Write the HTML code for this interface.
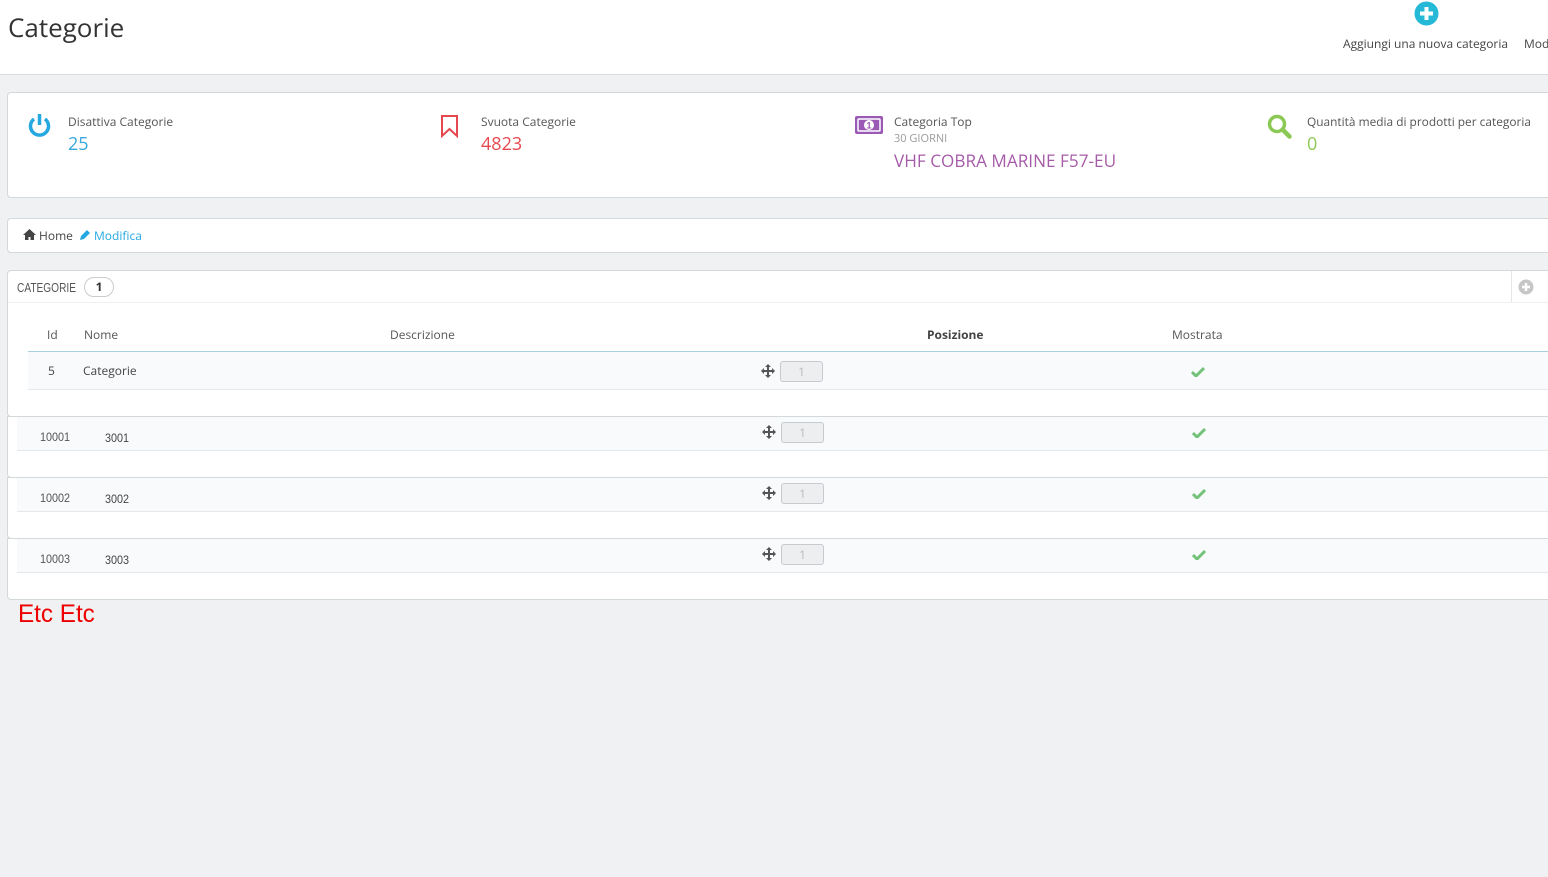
<!DOCTYPE html>
<html><head><meta charset="utf-8"><style>
*{box-sizing:border-box;margin:0;padding:0}
body{width:1548px;height:877px;background:#eff1f2;font-family:"Open Sans","DejaVu Sans",sans-serif;color:#555;position:relative;overflow:hidden;font-size:12px}
.a{position:absolute;white-space:nowrap}
.top{position:absolute;left:0;top:0;width:1548px;height:75px;background:#fff;border-bottom:1px solid #d8dbde}
.panel{position:absolute;left:7px;width:1560px;background:#fff;border:1px solid #d3d8db;border-radius:4px}
.row{position:absolute;left:20px;width:1540px;background:#f8fafc;border-bottom:1px solid #e4e8eb}
.inp{position:absolute;width:43px;height:21px;background:#eceeef;border:1px solid #c7cbcf;border-radius:3px;color:#bbb;text-align:center;font-size:12px;line-height:19px}
.chk{position:absolute}
.mv{position:absolute}
.n{font-family:'Liberation Sans',sans-serif;font-size:12px;transform:scaleX(.9);transform-origin:left}
</style></head><body>
<div class="top"></div>
<div class="a" style="left:8px;top:9px;font-size:26px;color:#333">Categorie</div>
<svg class="a" style="left:1414px;top:1px" width="25" height="25"><circle cx="12.5" cy="12.5" r="12" fill="#25b9d7"/><path d="M12.5 6v13M6 12.5h13" stroke="#fff" stroke-width="4"/></svg>
<div class="a" style="left:1343px;top:35px;font-size:12px;color:#444">Aggiungi una nuova categoria</div>
<div class="a" style="left:1524px;top:35px;font-size:12px;color:#444">Mod</div>

<div class="panel" style="top:92px;height:106px"></div>
<svg class="a" style="left:27px;top:112px" width="25" height="26"><path d="M7 7a9 9 0 1 0 11 0" fill="none" stroke="#25a8e0" stroke-width="3.5"/><path d="M12.5 2v11" stroke="#25a8e0" stroke-width="3.5"/></svg>
<div class="a" style="left:68px;top:113px;font-size:12px;color:#555">Disattiva Categorie</div>
<div class="a" style="left:68px;top:132px;font-size:18px;color:#3aa7dd">25</div>
<svg class="a" style="left:440px;top:114px" width="20" height="24"><path d="M2 2h15v20l-7.5-7-7.5 7z" fill="none" stroke="#e5494f" stroke-width="2"/></svg>
<div class="a" style="left:481px;top:113px;font-size:12px;color:#555">Svuota Categorie</div>
<div class="a" style="left:481px;top:132px;font-size:18px;color:#e5494f">4823</div>
<svg class="a" style="left:854px;top:115px" width="30" height="20"><rect x="1" y="1" width="28" height="18" rx="2" fill="#9b59b6"/><rect x="4" y="4" width="22" height="12" rx="1" fill="none" stroke="#fff" stroke-width="1.5"/><circle cx="15" cy="10" r="5" fill="#fff"/><text x="15" y="13.5" font-size="9" text-anchor="middle" fill="#9b59b6" font-family="Liberation Sans" font-weight="bold">1</text></svg>
<div class="a" style="left:894px;top:113px;font-size:12px;color:#555">Categoria Top</div>
<div class="a" style="left:894px;top:131px;font-size:11px;color:#999">30 GIORNI</div>
<div class="a" style="left:894px;top:149px;font-size:17px;color:#a55ba8;transform:scaleX(1.01);transform-origin:left">VHF COBRA MARINE F57-EU</div>
<svg class="a" style="left:1266px;top:113px" width="28" height="28"><circle cx="11" cy="11" r="7.5" fill="none" stroke="#8bc954" stroke-width="3.5"/><path d="M16.5 16.5l7 7" stroke="#8bc954" stroke-width="4.5" stroke-linecap="round"/></svg>
<div class="a" style="left:1307px;top:113px;font-size:12px;color:#555;transform:scaleX(.99);transform-origin:left">Quantità media di prodotti per categoria</div>
<div class="a" style="left:1307px;top:132px;font-size:18px;color:#8bc954">0</div>

<div class="panel" style="top:218px;height:35px"></div>
<svg class="a" style="left:23px;top:229px" width="13" height="11"><path d="M6.5 0L0 6h2v5h3.5V8h2v3H11V6h2z" fill="#444"/></svg>
<div class="a" style="left:39px;top:227px;font-size:12px;color:#444">Home</div>
<svg class="a" style="left:79px;top:229px" width="12" height="12"><path d="M1 11l1-4 6-6 3 3-6 6z" fill="#25a8e0"/></svg>
<div class="a" style="left:94px;top:227px;font-size:12px;color:#25a8e0">Modifica</div>

<div class="panel" style="top:270px;height:147px"></div>
<div class="a" style="left:8px;top:302px;width:1540px;height:1px;background:#eef0f2"></div>
<div class="a" style="left:17px;top:280px;font-size:13px;color:#555;font-family:'Liberation Sans',sans-serif;transform:scaleX(.78);transform-origin:left">CATEGORIE</div>
<div class="a" style="left:84px;top:277px;width:30px;height:20px;border:1px solid #ccc;border-radius:10px;text-align:center;font-size:12px;font-weight:bold;color:#333;line-height:18px">1</div>
<div class="a" style="left:1511px;top:271px;width:1px;height:31px;background:#e4e6e8"></div>
<svg class="a" style="left:1518px;top:279px" width="16" height="16"><circle cx="8" cy="8" r="7.5" fill="#c6c6c6"/><path d="M8 4v8M4 8h8" stroke="#fff" stroke-width="2.5"/></svg>
<div class="a" style="left:47px;top:326px;color:#555">Id</div>
<div class="a" style="left:84px;top:326px;color:#555">Nome</div>
<div class="a" style="left:390px;top:326px;color:#555">Descrizione</div>
<div class="a" style="left:927px;top:326px;color:#444;font-weight:bold">Posizione</div>
<div class="a" style="left:1172px;top:326px;color:#555">Mostrata</div>
<div class="row" style="left:28px;top:351px;height:39px;border-top:1px solid #a7cfe0"></div>
<div class="a" style="left:48px;top:362px;color:#444">5</div>
<div class="a" style="left:83px;top:362px;color:#444">Categorie</div>

<svg class="mv" style="left:761px;top:364px" width="14" height="14"><path d="M7 0l3 3H8v3h3V4l3 3-3 3V8H8v3h2l-3 3-3-3h2V8H3v2L0 7l3-3v2h3V3H4z" fill="#555"/></svg>
<div class="inp" style="left:780px;top:361px">1</div>
<svg class="chk" style="left:1191px;top:366px" width="14" height="11"><path d="M1 6l4 4 8-8" fill="none" stroke="#72c279" stroke-width="3"/></svg>

<div class="panel" style="top:416px;height:62px;border-radius:0 0 4px 4px"></div>
<div class="row" style="left:17px;top:417px;height:34px"></div>
<div class="a n" style="left:40px;top:430px;color:#555">10001</div>
<div class="a n" style="left:105px;top:431px;color:#444">3001</div>
<svg class="mv" style="left:762px;top:425px" width="14" height="14"><path d="M7 0l3 3H8v3h3V4l3 3-3 3V8H8v3h2l-3 3-3-3h2V8H3v2L0 7l3-3v2h3V3H4z" fill="#555"/></svg>
<div class="inp" style="left:781px;top:422px">1</div>
<svg class="chk" style="left:1192px;top:427px" width="14" height="11"><path d="M1 6l4 4 8-8" fill="none" stroke="#72c279" stroke-width="3"/></svg>

<div class="panel" style="top:477px;height:62px;border-radius:0 0 4px 4px"></div>
<div class="row" style="left:17px;top:478px;height:34px"></div>
<div class="a n" style="left:40px;top:491px;color:#555">10002</div>
<div class="a n" style="left:105px;top:492px;color:#444">3002</div>
<svg class="mv" style="left:762px;top:486px" width="14" height="14"><path d="M7 0l3 3H8v3h3V4l3 3-3 3V8H8v3h2l-3 3-3-3h2V8H3v2L0 7l3-3v2h3V3H4z" fill="#555"/></svg>
<div class="inp" style="left:781px;top:483px">1</div>
<svg class="chk" style="left:1192px;top:488px" width="14" height="11"><path d="M1 6l4 4 8-8" fill="none" stroke="#72c279" stroke-width="3"/></svg>

<div class="panel" style="top:538px;height:62px;border-radius:0 0 4px 4px"></div>
<div class="row" style="left:17px;top:539px;height:34px"></div>
<div class="a n" style="left:40px;top:552px;color:#555">10003</div>
<div class="a n" style="left:105px;top:553px;color:#444">3003</div>
<svg class="mv" style="left:762px;top:547px" width="14" height="14"><path d="M7 0l3 3H8v3h3V4l3 3-3 3V8H8v3h2l-3 3-3-3h2V8H3v2L0 7l3-3v2h3V3H4z" fill="#555"/></svg>
<div class="inp" style="left:781px;top:544px">1</div>
<svg class="chk" style="left:1192px;top:549px" width="14" height="11"><path d="M1 6l4 4 8-8" fill="none" stroke="#72c279" stroke-width="3"/></svg>

<div class="a" style="left:18px;top:600px;font-size:25px;color:#e00;font-family:'Liberation Sans',sans-serif;transform:scaleX(.97);transform-origin:left">Etc Etc</div>
</body></html>
